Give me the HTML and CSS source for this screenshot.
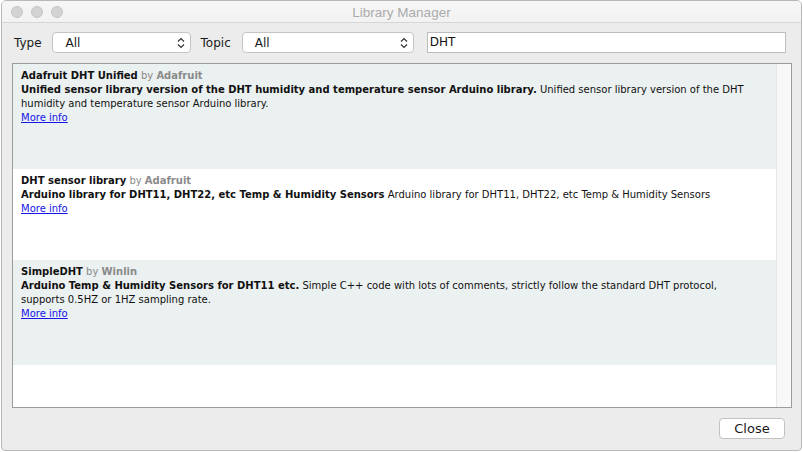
FILE: index.html
```html
<!DOCTYPE html>
<html>
<head>
<meta charset="utf-8">
<link rel="stylesheet" href="styles.css">
</head>
<body>
<div class="window">
  <div class="titlebar">
    <div class="lights"><span class="dot"></span><span class="dot"></span><span class="dot"></span></div>
    <div class="title">Library Manager</div>
  </div>
  <div class="toolbar">
    <span class="label">Type</span>
    <div class="select select-type"><span>All</span>
      <svg class="arrows" width="8" height="12" viewBox="0 0 8 12"><path d="M1 4.5 L4 1.5 L7 4.5 M1 7.5 L4 10.5 L7 7.5" fill="none" stroke="#333" stroke-width="1.2"/></svg>
    </div>
    <span class="label label-topic">Topic</span>
    <div class="select select-topic"><span>All</span>
      <svg class="arrows" width="8" height="12" viewBox="0 0 8 12"><path d="M1 4.5 L4 1.5 L7 4.5 M1 7.5 L4 10.5 L7 7.5" fill="none" stroke="#333" stroke-width="1.2"/></svg>
    </div>
    <div class="search">DHT</div>
  </div>
  <div class="panel">
    <div class="list">
      <div class="row row-alt">
        <div><b>Adafruit DHT Unified</b> <span class="by">by <b>Adafruit</b></span></div>
        <div><b>Unified sensor library version of the DHT humidity and temperature sensor Arduino library.</b> Unified sensor library version of the DHT humidity and temperature sensor Arduino library.</div>
        <div><a class="more">More info</a></div>
      </div>
      <div class="row">
        <div><b>DHT sensor library</b> <span class="by">by <b>Adafruit</b></span></div>
        <div><b>Arduino library for DHT11, DHT22, etc Temp &amp; Humidity Sensors</b> Arduino library for DHT11, DHT22, etc Temp &amp; Humidity Sensors</div>
        <div><a class="more">More info</a></div>
      </div>
      <div class="row row-alt">
        <div><b>SimpleDHT</b> <span class="by">by <b>Winlin</b></span></div>
        <div><b>Arduino Temp &amp; Humidity Sensors for DHT11 etc.</b> Simple C++ code with lots of comments, strictly follow the standard DHT protocol, supports 0.5HZ or 1HZ sampling rate.</div>
        <div><a class="more">More info</a></div>
      </div>
    </div>
    <div class="scrollbar"></div>
  </div>
  <div class="footer">
    <div class="button">Close</div>
  </div>
</div>
</body>
</html>
```
FILE: styles.css
```css
html, body {
  margin: 0;
  padding: 0;
  background: #ffffff;
}
.window {
  box-sizing: border-box;
  margin-left: 1px;
  width: 801px;
  height: 451px;
  border: 1px solid #b8b8b8;
  border-radius: 5px 5px 4px 4px;
  background: #ececec;
  display: flex;
  flex-direction: column;
  overflow: hidden;
}
.titlebar {
  position: relative;
  height: 21px;
  flex: none;
  background: linear-gradient(#f6f6f6, #f2f2f2);
  border-bottom: 1px solid #d6d6d6;
  display: flex;
  align-items: center;
  justify-content: center;
}
.lights {
  position: absolute;
  left: 9px;
  top: 5px;
  display: flex;
  gap: 8px;
}
.dot {
  border-radius: 50%;
  background: #d3d3d3;
  border: 1px solid #c6c6c6;
  box-sizing: content-box;
  width: 10px;
  height: 10px;
}
.title {
  font-family: "Liberation Sans", Arial, sans-serif;
  font-size: 13.5px;
  color: #ababab;
  margin-top: 1px;
}
.toolbar {
  flex: none;
  display: flex;
  align-items: center;
  padding: 9px 9px 10px 12px;
  font-family: "DejaVu Sans", sans-serif;
  font-size: 12px;
  color: #1a1a1a;
}
.label {
  margin-right: 10px;
}
.label-topic {
  margin-right: 11px;
}
.select {
  box-sizing: border-box;
  height: 21px;
  background: #ffffff;
  border: 1px solid #c4c4c4;
  border-radius: 4px;
  display: flex;
  align-items: center;
  justify-content: space-between;
  padding: 0 5px 0 13px;
  margin-right: 10px;
}
.select-type {
  width: 139px;
}
.select-topic {
  width: 172px;
  padding-left: 12px;
  margin-right: 13px;
}
.arrows {
  display: block;
}
.search {
  box-sizing: border-box;
  width: 359px;
  height: 21px;
  background: #ffffff;
  border: 1px solid #bdbdbd;
  padding: 0 2px;
  line-height: 19px;
  font-size: 12px;
  color: #111;
}
.panel {
  flex: 1;
  margin: 0 9px 0 10px;
  border: 1px solid #9c9c9c;
  background: #ffffff;
  display: flex;
  min-height: 0;
}
.list {
  flex: 1;
  font-family: "DejaVu Sans", Verdana, sans-serif;
  font-size: 10px;
  line-height: 14px;
  color: #111;
}
.row {
  padding: 5px 20px 44px 8px;
  background: #ffffff;
}
.row-alt {
  background: #ebf0f0;
}
.row b {
  font-weight: bold;
}
.by {
  color: #8a8a8a;
}
.more {
  color: #1515e8;
  text-decoration: underline;
}
.scrollbar {
  width: 14px;
  flex: none;
  background: #f8f8f8;
  border-left: 1px solid #e8e8e8;
}
.footer {
  flex: none;
  display: flex;
  justify-content: flex-end;
  padding: 10px 16px 11px;
}
.button {
  box-sizing: border-box;
  width: 66px;
  height: 21px;
  background: #ffffff;
  border: 1px solid #c2c2c2;
  border-radius: 4px;
  font-family: "DejaVu Sans", sans-serif;
  font-size: 13px;
  color: #1a1a1a;
  display: flex;
  align-items: center;
  justify-content: center;
}
```
